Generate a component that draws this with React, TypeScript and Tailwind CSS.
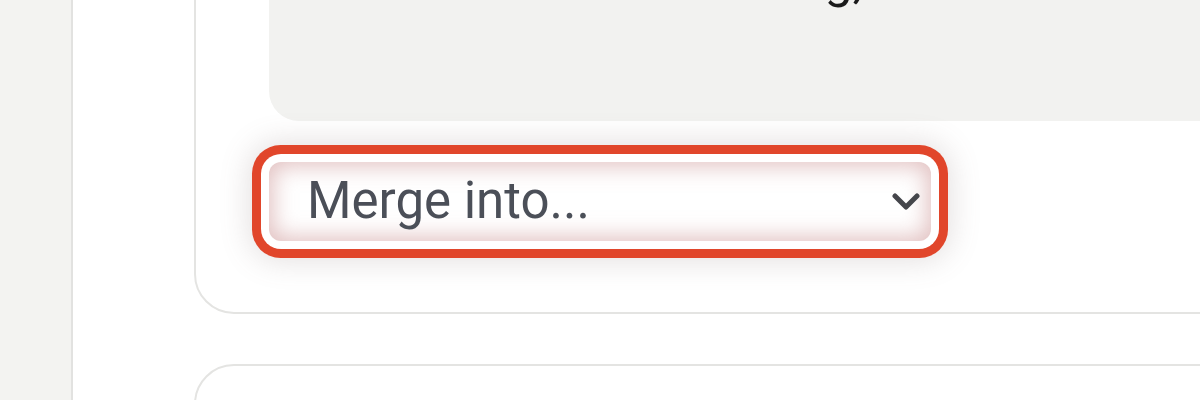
import { useState } from "react";

const Chevron = () => (
  <svg width="28" height="18" viewBox="0 0 28 18" className="shrink-0">
    <polyline points="3,3 14,14 25,3" fill="none" stroke="#45464b" strokeWidth="5" strokeLinecap="round" strokeLinejoin="round" />
  </svg>
);

export default function App() {
  const [value, setValue] = useState("");

  return (
    <div className="flex h-[400px] w-[1200px] overflow-hidden bg-white font-['Roboto',sans-serif]">
      <div className="w-[73px] shrink-0 border-r-2 border-[#e2e2e0] bg-[#f3f3f1]" />

      <div className="flex w-[1400px] shrink-0 flex-col gap-[50px] pl-[121px]">
        <div className="-mt-[200px] shrink-0 rounded-[40px] border-2 border-[#e4e4e2] bg-white px-[73px] pb-[71px] pt-[71px]">
          <div className="h-[248px] rounded-[30px] bg-[#f2f2f0] pl-[512px] pt-[82px] text-[50px] leading-none text-[#1b1b1b]">
            tag,
          </div>

          <div className="mt-[41px] w-[662px]">
            <label className="relative flex h-[79px] items-center rounded-[12px] bg-white pl-[38px] pr-[11px] shadow-[inset_0_0_22px_4px_rgba(200,140,140,0.55),0_0_0_8px_#ffffff,0_0_0_17px_#e1462b,0_0_30px_20px_rgba(120,100,100,0.2)]">
              <span className="flex-1 pb-[2px] text-[51px] leading-none text-[#4b4f58]">
                {value || "Merge into..."}
              </span>
              <Chevron />
              <select
                value={value}
                onChange={(e) => setValue(e.target.value)}
                className="absolute inset-0 cursor-pointer opacity-0"
              >
                <option value="">Merge into...</option>
              </select>
            </label>
          </div>
        </div>

        <div className="h-[200px] shrink-0 rounded-[40px] border-2 border-[#e4e4e2] bg-white" />
      </div>
    </div>
  );
}
